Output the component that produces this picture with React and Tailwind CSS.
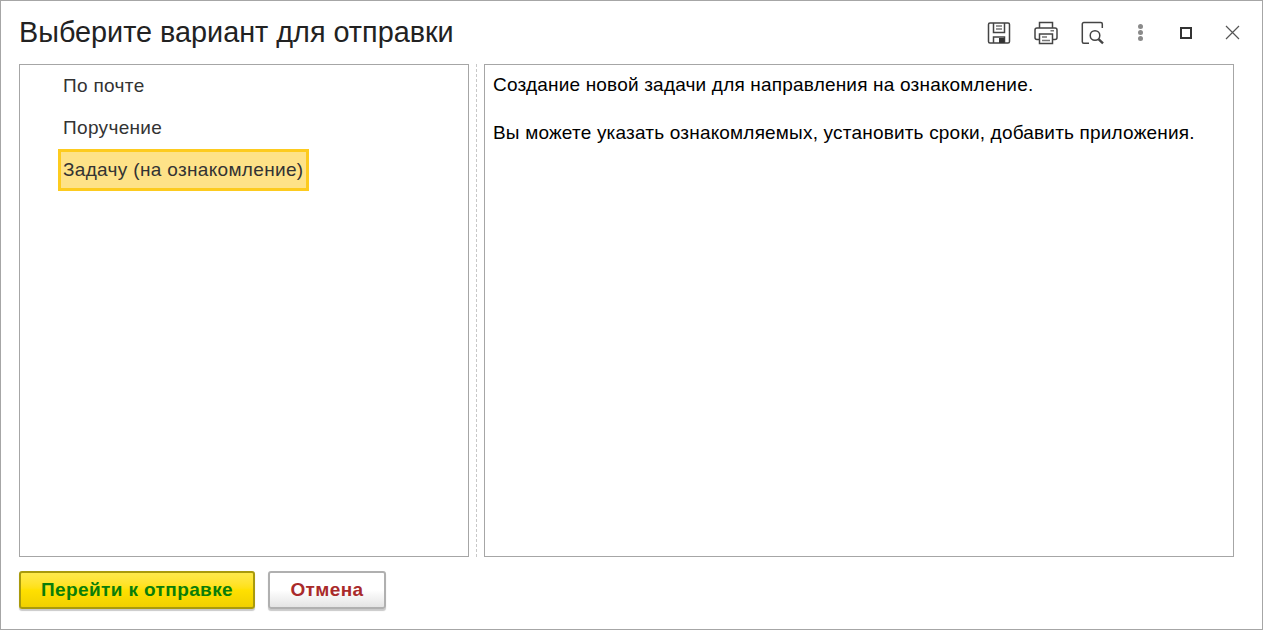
const font = { fontFamily: '"Liberation Sans", Arial, sans-serif' };

function ToolIcons() {
  return (
    <div className="flex items-center">
      <svg className="h-6 w-6" viewBox="0 0 24 24" fill="none" stroke="#444" strokeWidth="1.5">
        <path d="M1.5 3.5a1.5 1.5 0 0 1 1.5-1.5h18a1.5 1.5 0 0 1 1.5 1.5v17a1.5 1.5 0 0 1-1.5 1.5H3a1.5 1.5 0 0 1-1.5-1.5z" />
        <path d="M6.5 2v9.5h11V2" />
        <path d="M9 5h6M9 8h6" stroke="#777" />
        <path d="M6.5 22v-6h11v6" />
        <rect x="12" y="17" width="5.5" height="5" fill="#333" stroke="none" />
      </svg>
      <svg className="ml-[23px] h-6 w-6" viewBox="0 0 24 24" fill="none" stroke="#444" strokeWidth="1.5">
        <path d="M5.5 7V1.5h13V7" />
        <path d="M5.5 18.5H3a2 2 0 0 1-2-2V9a2 2 0 0 1 2-2h18a2 2 0 0 1 2 2v7.5a2 2 0 0 1-2 2h-2.5" />
        <path d="M5.5 13h13v9.5h-13z" />
        <path d="M8 16h5M8 19.5h8M16.5 9.8h3.5" stroke="#777" />
      </svg>
      <svg className="ml-[23px] h-6 w-6" viewBox="0 0 24 24" fill="none" stroke="#444" strokeWidth="1.5">
        <path d="M8 22.3H2.8a1.5 1.5 0 0 1-1.5-1.5V3a1.5 1.5 0 0 1 1.5-1.5h17a1.5 1.5 0 0 1 1.5 1.5v4" />
        <circle cx="14" cy="14.5" r="4.8" />
        <path d="M17.5 18.2l4.5 4.2" strokeWidth="2.4" />
      </svg>
      <div className="ml-[33px] flex w-[6px] flex-col gap-[1px]">
        <span className="h-[5px] w-[5px] rounded-full bg-[#8a8a8a]" />
        <span className="h-[5px] w-[5px] rounded-full bg-[#8a8a8a]" />
        <span className="h-[5px] w-[5px] rounded-full bg-[#8a8a8a]" />
      </div>
      <span className="ml-[36px] h-[12px] w-[12px] border-2 border-[#333]" />
      <svg className="ml-[33px] h-[15px] w-[15px]" viewBox="0 0 15 15" fill="none" stroke="#555" strokeWidth="1.2">
        <path d="M1 1l13 13M14 1L1 14" />
      </svg>
    </div>
  );
}

export default function App() {
  return (
    <div style={font} className="flex h-[630px] w-[1263px] flex-col border border-[#a6a6a6] bg-white">
      <div className="flex h-[63px] items-center justify-between pl-[18px] pr-[22px]">
        <h1 className="text-[28.8px] font-normal text-[#222]">Выберите вариант для отправки</h1>
        <ToolIcons />
      </div>

      <div className="flex h-[493px] pl-[18px] pr-[28px]">
        <div className="w-[450px] border border-[#a6a6a6] pl-[38px] text-[19px] tracking-[0.33px] text-[#333]">
          <div className="flex h-[42px] items-center pl-[5px]">По почте</div>
          <div className="flex h-[42px] items-center pl-[5px]">Поручение</div>
          <div className="flex h-[42px] w-[251px] items-center whitespace-nowrap border-[3px] border-[#fdcb1f] bg-[#fee288] pl-[2px] pt-[1px]">
            Задачу (на ознакомление)
          </div>
        </div>
        <div className="flex w-[15px] justify-center">
          <div className="w-0 border-l border-dashed border-[#c8c8c8]" />
        </div>
        <div className="flex-1 border border-[#a6a6a6] pl-2 pt-[8px] text-[19px] leading-6 tracking-[0.19px] text-black">
          <p>Создание новой задачи для направления на ознакомление.</p>
          <p className="mt-6">Вы можете указать ознакомляемых, установить сроки, добавить приложения.</p>
        </div>
      </div>

      <div className="flex gap-[13px] pl-[18px] pt-[14px]">
        <button
          type="button"
          className="h-[38px] w-[236px] rounded-[3px] border-2 border-[#a99a0c] bg-gradient-to-b from-[#ffe94a] via-[#ffe000] to-[#f0d000] text-[19px] font-bold tracking-[0.4px] text-[#0a7d0a] shadow-[0_2px_1px_#c9c9c9]"
        >
          Перейти к отправке
        </button>
        <button
          type="button"
          className="h-[38px] w-[118px] rounded-[3px] border-2 border-[#b0b0b0] bg-gradient-to-b from-white via-white to-[#e4e4e4] text-[19px] font-bold tracking-[0.4px] text-[#a92a2a] shadow-[0_2px_1px_#c9c9c9]"
        >
          Отмена
        </button>
      </div>
    </div>
  );
}
